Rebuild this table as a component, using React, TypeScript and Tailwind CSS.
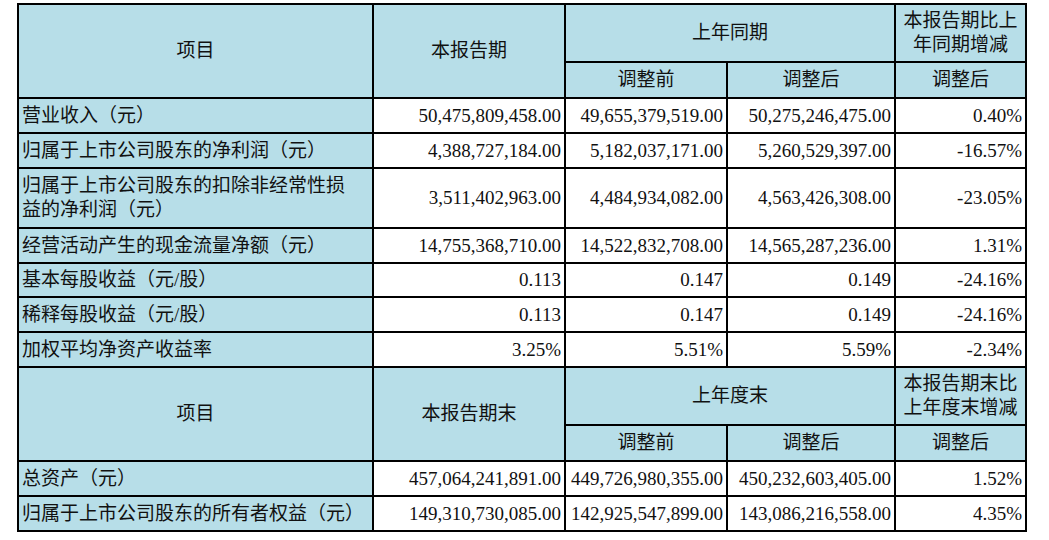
import React from "react";

const H = "bg-[#b7dee8]";
const cell = "border-2 border-black px-[3px] leading-[24px]";

type Row = { label: React.ReactNode; v: string[]; h: string };

const rows1: Row[] = [
  { label: "营业收入（元）", v: ["50,475,809,458.00", "49,655,379,519.00", "50,275,246,475.00", "0.40%"], h: "h-[35px]" },
  { label: "归属于上市公司股东的净利润（元）", v: ["4,388,727,184.00", "5,182,037,171.00", "5,260,529,397.00", "-16.57%"], h: "h-[35px]" },
  {
    label: (
      <>
        归属于上市公司股东的扣除非经常性损
        <br />
        益的净利润（元）
      </>
    ),
    v: ["3,511,402,963.00", "4,484,934,082.00", "4,563,426,308.00", "-23.05%"],
    h: "h-[60px]",
  },
  { label: "经营活动产生的现金流量净额（元）", v: ["14,755,368,710.00", "14,522,832,708.00", "14,565,287,236.00", "1.31%"], h: "h-[35px]" },
  { label: "基本每股收益（元/股）", v: ["0.113", "0.147", "0.149", "-24.16%"], h: "h-[34px]" },
  { label: "稀释每股收益（元/股）", v: ["0.113", "0.147", "0.149", "-24.16%"], h: "h-[35px]" },
  { label: "加权平均净资产收益率", v: ["3.25%", "5.51%", "5.59%", "-2.34%"], h: "h-[35px]" },
];

const rows2: Row[] = [
  { label: "总资产（元）", v: ["457,064,241,891.00", "449,726,980,355.00", "450,232,603,405.00", "1.52%"], h: "h-[35px]" },
  { label: "归属于上市公司股东的所有者权益（元）", v: ["149,310,730,085.00", "142,925,547,899.00", "143,086,216,558.00", "4.35%"], h: "h-[35px]" },
];

function DataRow({ r }: { r: Row }) {
  return (
    <tr className={r.h}>
      <td className={`${cell} ${H} text-left align-middle`}>{r.label}</td>
      {r.v.map((x, i) => (
        <td key={i} className={`${cell} bg-white text-right align-middle`}>
          {x}
        </td>
      ))}
    </tr>
  );
}

function Header({ c2, c3, c5a, c5b }: { c2: string; c3: string; c5a: string; c5b: string }) {
  return (
    <>
      <tr className="h-[58px]">
        <td rowSpan={2} className={`${cell} ${H} text-center align-middle`}>
          项目
        </td>
        <td rowSpan={2} className={`${cell} ${H} text-center align-middle`}>
          {c2}
        </td>
        <td colSpan={2} className={`${cell} ${H} text-center align-middle`}>
          {c3}
        </td>
        <td className={`${cell} ${H} text-center align-middle`}>
          {c5a}
          <br />
          {c5b}
        </td>
      </tr>
      <tr className="h-[36px]">
        <td className={`${cell} ${H} text-center align-middle`}>调整前</td>
        <td className={`${cell} ${H} text-center align-middle`}>调整后</td>
        <td className={`${cell} ${H} text-center align-middle`}>调整后</td>
      </tr>
    </>
  );
}

export default function App() {
  return (
    <div
      className="w-[1049px] h-[540px] bg-white pl-[17px] pt-[3px] text-[#111] text-[19px]"
      style={{ fontFamily: '"Liberation Serif", "Noto Sans CJK SC", serif' }}
    >
      <table className="border-collapse table-fixed w-[1008px]">
        <colgroup>
          <col className="w-[355px]" />
          <col className="w-[192px]" />
          <col className="w-[162px]" />
          <col className="w-[168px]" />
          <col className="w-[131px]" />
        </colgroup>
        <tbody>
          <Header c2="本报告期" c3="上年同期" c5a="本报告期比上" c5b="年同期增减" />
          {rows1.map((r, i) => (
            <DataRow key={i} r={r} />
          ))}
          <Header c2="本报告期末" c3="上年度末" c5a="本报告期末比" c5b="上年度末增减" />
          {rows2.map((r, i) => (
            <DataRow key={i} r={r} />
          ))}
        </tbody>
      </table>
    </div>
  );
}
